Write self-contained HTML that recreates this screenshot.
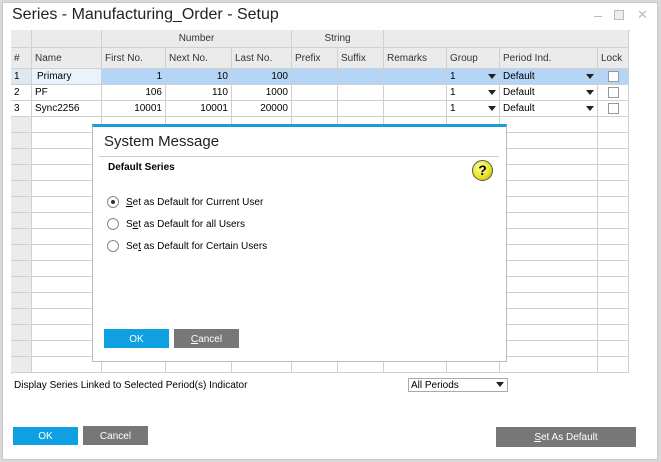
<!DOCTYPE html>
<html><head><meta charset="utf-8"><style>
*{box-sizing:border-box;margin:0;padding:0}
body{width:661px;height:462px;background:#d9d9d9;font-family:"Liberation Sans",sans-serif;font-size:10px;color:#000;position:relative;overflow:hidden}
.win{position:absolute;left:2px;top:2px;width:656px;height:458px;background:#fff;border:1px solid #c8c8c8}
.abs{position:absolute}
.title{left:12px;top:6px;font-size:16px;color:#222}
.c{position:absolute;border-right:1px solid #d0d0d0;border-bottom:1px solid #d0d0d0;white-space:nowrap;overflow:hidden;line-height:16px;padding:0 3px}
.h{background:#ebebeb;color:#333}
.r{text-align:right}
.btn{position:absolute;color:#fff;text-align:center;font-size:10px;padding-top:2px}
.blue{background:#0fa0e2}.gray{background:#777}
.arr{position:absolute;width:0;height:0;border-left:4px solid transparent;border-right:4px solid transparent;border-top:5px solid #222}
.chk{position:absolute;width:11px;height:11px;border:1px solid #999;background:#fff}
.radio{position:absolute;width:12px;height:12px;border-radius:50%;border:1px solid #888;background:#fff}
</style></head><body>
<div class="win"></div>
<div class="abs title">Series - Manufacturing_Order - Setup</div>
<div class="abs" style="left:594px;top:16px;width:8px;height:1px;background:#bbb"></div>
<div class="abs" style="left:614px;top:10px;width:10px;height:10px;border:1px solid #bbb;background:#eee"></div>
<div class="abs" style="left:637px;top:7px;font-size:13px;color:#bbb">✕</div>
<div class="abs" style="left:11px;top:30px;width:619px;height:344px;border-left:1px solid #d0d0d0;border-top:1px solid #d0d0d0;background:#fff" id="g"></div>
<div id="cells"></div>
<div class="abs" style="left:14px;top:380px;font-size:10px">Display Series Linked to Selected Period(s) Indicator</div>
<div class="abs" style="left:408px;top:378px;width:100px;height:14px;border:1px solid #aaa;line-height:13px;padding-left:2px">All Periods</div>
<div class="arr" style="left:496px;top:382px"></div>
<div class="btn blue" style="left:13px;top:427px;width:65px;height:18px;line-height:16px">OK</div>
<div class="btn gray" style="left:83px;top:426px;width:65px;height:19px;line-height:17px">Cancel</div>
<div class="btn gray" style="left:496px;top:427px;width:140px;height:20px;line-height:18px"><u>S</u>et As Default</div>

<div class="abs" style="left:92px;top:124px;width:415px;height:238px;background:#fff;border:1px solid #bbb;border-top:3px solid #1a9ad6">
 <div class="abs" style="left:11px;top:6px;font-size:15px;color:#222">System Message</div>
 <div class="abs" style="left:6px;top:29px;width:400px;height:1px;background:#ccc"></div>
 <div class="abs" style="left:15px;top:35px;font-weight:bold;font-size:10px">Default Series</div>
 <div class="abs" style="left:379px;top:33px;width:21px;height:21px;border-radius:50%;background:radial-gradient(circle at 40% 35%,#ffffa0,#e8e020 60%,#b0a800);border:1px solid #555;text-align:center;font-weight:bold;font-size:14px;line-height:19px">?</div>
 <div class="radio" style="left:14px;top:69px"><div class="abs" style="left:3px;top:3px;width:4px;height:4px;border-radius:50%;background:#333"></div></div>
 <div class="abs" style="left:33px;top:70px"><u>S</u>et as Default for Current User</div>
 <div class="radio" style="left:14px;top:91px"></div>
 <div class="abs" style="left:33px;top:92px">S<u>e</u>t as Default for all Users</div>
 <div class="radio" style="left:14px;top:113px"></div>
 <div class="abs" style="left:33px;top:114px">Se<u>t</u> as Default for Certain Users</div>
 <div class="btn blue" style="left:11px;top:202px;width:65px;height:19px;line-height:17px">OK</div>
 <div class="btn gray" style="left:81px;top:202px;width:65px;height:19px;line-height:17px"><u>C</u>ancel</div>
</div>

<script>
var xs=[11,32,102,166,232,292,338,384,447,500,598,629];
var out='';
function cell(x1,x2,y1,y2,txt,cls,st){out+='<div class="c '+(cls||'')+'" style="left:'+x1+'px;top:'+y1+'px;width:'+(x2-x1)+'px;height:'+(y2-y1)+'px;'+(st||'')+'">'+(txt||'')+'</div>';}
cell(11,32,30,48,'','h');cell(32,102,30,48,'','h');
cell(102,292,30,48,'Number','h','text-align:center;line-height:17px');
cell(292,384,30,48,'String','h','text-align:center;line-height:17px');
cell(384,629,30,48,'','h');
var hd=['#','Name','First No.','Next No.','Last No.','Prefix','Suffix','Remarks','Group','Period Ind.','Lock'];
for(var i=0;i<11;i++)cell(xs[i],xs[i+1],48,69,hd[i],'h','line-height:21px');
var rows=[['1','Primary','1','10','100'],['2','PF','106','110','1000'],['3','Sync2256','10001','10001','20000']];
for(var r=0;r<3;r++){var y=69+r*16;
 for(var i=0;i<11;i++){var t='',cls='',st='';
  if(i==0){t=rows[r][0];st='background:'+(r==0?'#e0e8f0':'#fff');}
  else if(i==1){t=rows[r][1];st=r==0?'background:#eaf3fc;padding-left:5px':'';}
  else if(i<5){t=rows[r][i];cls='r';}
  else if(i==8)t='1';else if(i==9)t='Default';
  if(r==0&&i>1)st+='background:#b5d5f7;';
  cell(xs[i],xs[i+1],y,y+16,t,cls,st);
 }
 out+='<div class="arr" style="left:488px;top:'+(y+5)+'px"></div><div class="arr" style="left:586px;top:'+(y+5)+'px"></div><div class="chk" style="left:608px;top:'+(y+2)+'px"></div>';
}
for(var r=0;r<16;r++){var y=117+r*16;for(var i=0;i<11;i++)cell(xs[i],xs[i+1],y,y+16,'','',i==0?'background:#ebebeb':'');}
document.getElementById('cells').outerHTML=out;
</script>
</body></html>
